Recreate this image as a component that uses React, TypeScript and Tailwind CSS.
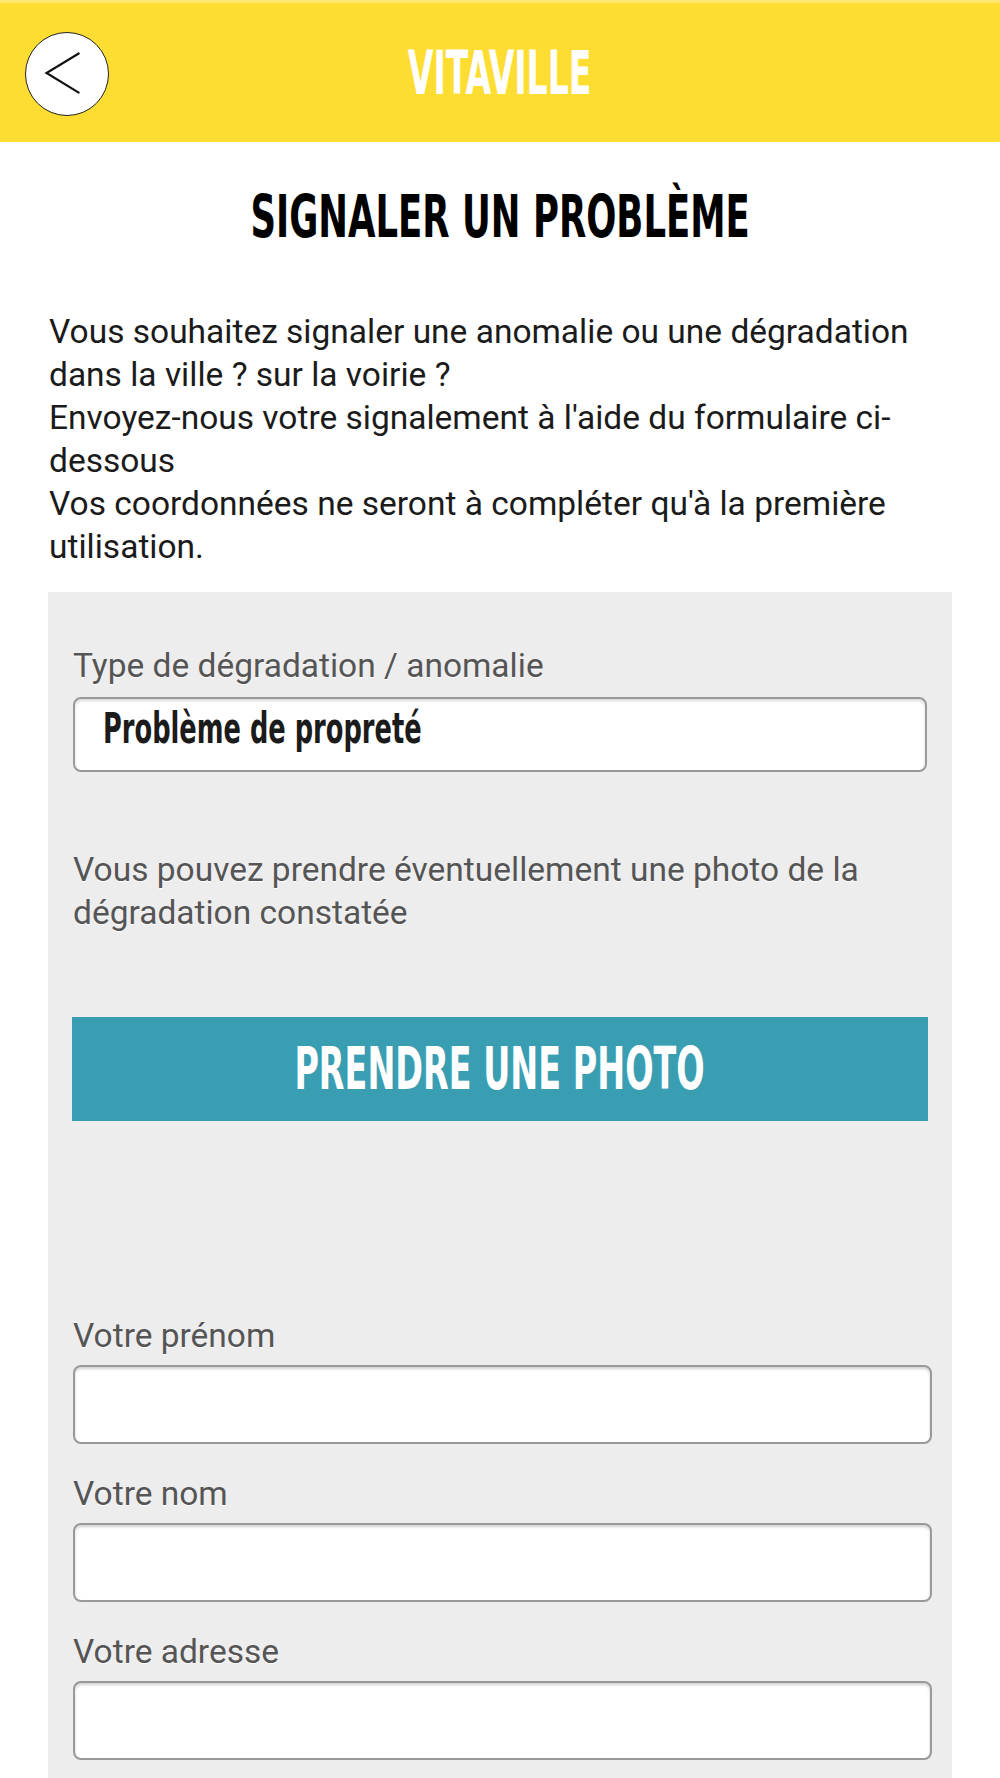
import React from "react";

const condensed = "font-['DejaVu_Sans_Condensed','DejaVu_Sans',sans-serif] font-bold";
const body = "font-['Roboto','Liberation_Sans',sans-serif]";

const BackButton = () => (
  <button className="w-[84px] h-[84px] rounded-full bg-white border-[1.5px] border-[#222] flex items-center justify-center">
    <svg width="84" height="84" viewBox="0 0 84 84" fill="none">
      <path d="M54 21 L21 41 L54 61" stroke="#111" strokeWidth="2.2" strokeLinecap="round" strokeLinejoin="miter" />
    </svg>
  </button>
);

const Field = ({ label }: { label: string }) => (
  <div className="mt-[28px]">
    <label className="block text-[33.5px] leading-[43px] text-[#555] [text-shadow:0_1px_0_#fff]">{label}</label>
    <input
      type="text"
      className="mt-[8px] block w-full h-[79px] rounded-[8px] border-2 border-[#999] bg-white shadow-[inset_0_2px_3px_rgba(0,0,0,0.18)] outline-none"
    />
  </div>
);

export default function App() {
  return (
    <div className={`${body} min-h-[1778px] bg-white text-[#1b1b1b]`}>
      <header className="h-[142px] bg-[#FEDD33] border-t-[3px] border-[#FFE770] grid grid-cols-[1fr_auto_1fr] items-center">
        <div className="pl-[25px] mt-[3px]">
          <BackButton />
        </div>
        <h1 className={`${condensed} text-white text-[60px] leading-none`}>
          <span className="inline-block scale-x-[0.614]">VITAVILLE</span>
        </h1>
        <div />
      </header>

      <main className="px-[48px]">
        <h2 className={`${condensed} mt-[46px] text-center text-[58px] leading-none text-black`}>
          <span className="inline-block scale-x-[0.68]">SIGNALER UN PROBLÈME</span>
        </h2>

        <p className="mt-[64px] pl-px text-[33.5px] leading-[43px]">
          Vous souhaitez signaler une anomalie ou une dégradation dans la ville ? sur la voirie ?
          <br />
          Envoyez-nous votre signalement à l'aide du formulaire ci-dessous
          <br />
          Vos coordonnées ne seront à compléter qu'à la première utilisation.
        </p>

        <form className="mt-[24px] bg-[#EDEDED] pl-[25px] pr-[20px] pt-[52px] pb-[40px]">
          <label className="block text-[33.5px] leading-[43px] text-[#555] [text-shadow:0_1px_0_#fff]">
            Type de dégradation / anomalie
          </label>
          <div className="mt-[10px] mr-[5px] h-[75px] rounded-[8px] border-2 border-[#999] bg-white shadow-[inset_0_2px_3px_rgba(0,0,0,0.15)] pl-[28px] pt-[9px]">
            <span className={`${condensed} inline-block origin-left scale-x-[0.68] text-[42px] leading-none text-[#1b1b1b]`}>
              Problème de propreté
            </span>
          </div>

          <p className="mt-[76px] text-[33.5px] leading-[43px] text-[#555] [text-shadow:0_1px_0_#fff]">
            Vous pouvez prendre éventuellement une photo de la dégradation constatée
          </p>

          <button
            type="button"
            className={`${condensed} mt-[83px] -ml-px mr-[4px] w-[calc(100%-3px)] h-[104px] bg-[#3A9EB3] text-white text-[58px] leading-none flex items-center justify-center`}
          >
            <span className="inline-block scale-x-[0.64]">PRENDRE UNE PHOTO</span>
          </button>

          <div className="h-[165px]" />

          <Field label="Votre prénom" />
          <Field label="Votre nom" />
          <Field label="Votre adresse" />
        </form>
      </main>
    </div>
  );
}
